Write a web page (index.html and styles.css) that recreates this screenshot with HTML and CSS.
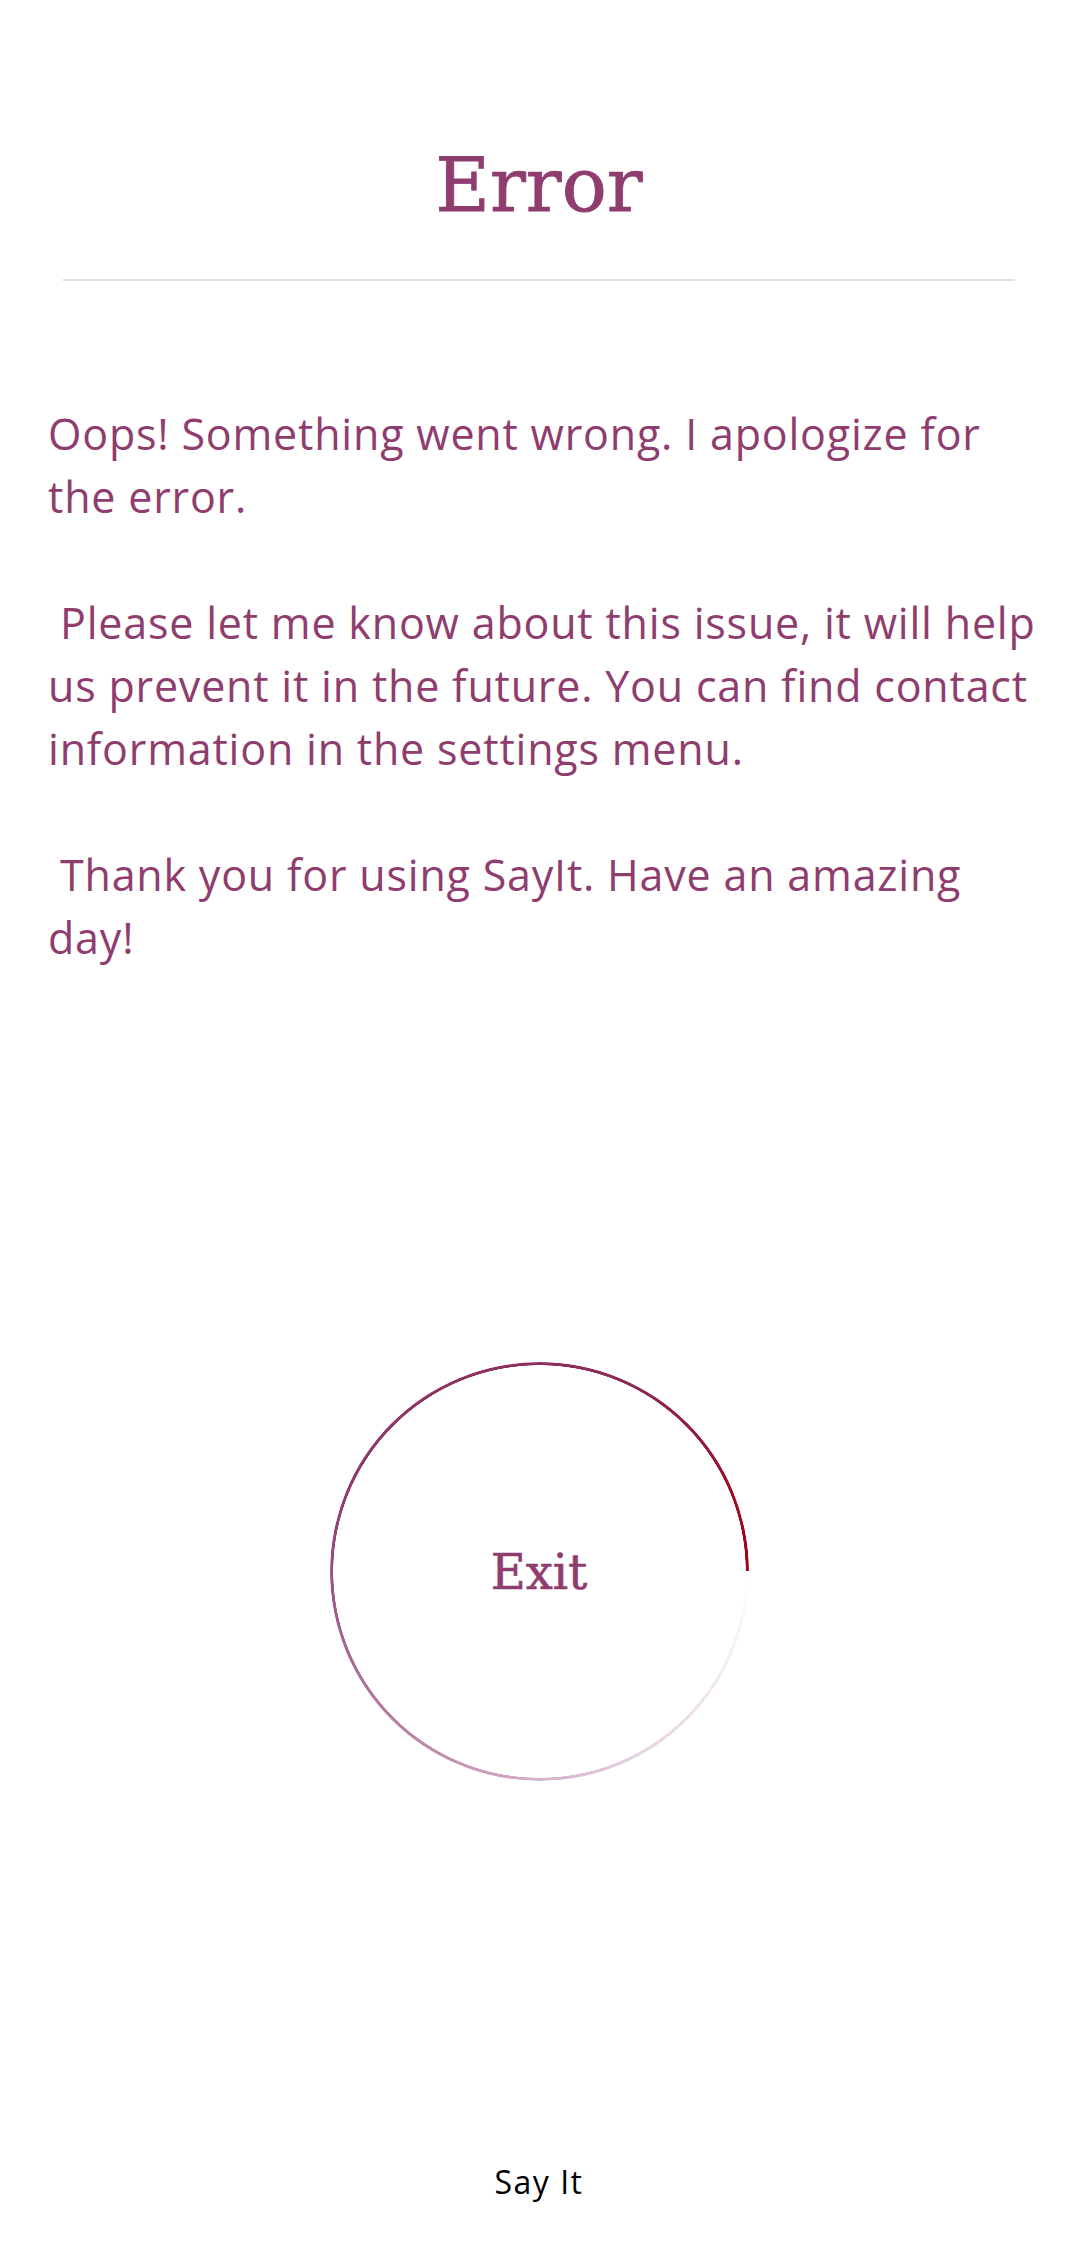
FILE: index.html
```html
<!DOCTYPE html>
<html lang="en">
<head>
<meta charset="utf-8">
<title>Error</title>
<link rel="stylesheet" href="styles.css">
</head>
<body>
<div class="page">
  <header class="header">
    <h1 class="title">Error</h1>
  </header>
  <hr class="divider">
  <p class="message">Oops! Something went wrong. I apologize for the error.

 Please let me know about this issue, it will help us prevent it in the future. You can find contact information in the settings menu.

 Thank you for using SayIt. Have an amazing day!</p>
  <div class="action">
    <button class="exit-btn" type="button"><span class="exit-label">Exit</span></button>
  </div>
  <footer class="footer">Say It</footer>
</div>
</body>
</html>
```
FILE: styles.css
```css
* { box-sizing: border-box; }
html, body { margin: 0; padding: 0; background: #ffffff; }
.page {
  width: 1078px;
  height: 2252px;
  display: flex;
  flex-direction: column;
}
.header {
  padding-top: 148px;
  display: flex;
  justify-content: center;
}
.title {
  margin: 0;
  font-family: "DejaVu Serif", serif;
  font-weight: normal;
  font-size: 75px;
  line-height: 75px;
  color: #8f3d6f;
  -webkit-text-stroke: 0.8px #8f3d6f;
}
.divider {
  margin: 56px 63px 0;
  border: 0;
  height: 2px;
  background: #dedede;
}
.message {
  margin: 121px 0 0;
  padding: 0 40px 0 48px;
  white-space: pre-wrap;
  font-family: "Open Sans", sans-serif;
  font-size: 43px;
  letter-spacing: 0.8px;
  line-height: 63px;
  color: #8f3d6f;
}
.action {
  display: flex;
  justify-content: center;
  margin-top: 393px;
}
.exit-btn {
  position: relative;
  width: 419px;
  height: 419px;
  border: 0;
  padding: 0;
  background: transparent;
  display: flex;
  align-items: center;
  justify-content: center;
  cursor: pointer;
}
.exit-btn::before {
  content: "";
  position: absolute;
  inset: 0;
  border-radius: 50%;
  background: conic-gradient(from 90deg, rgba(255,255,255,0) 0deg, #e9d3e1 60deg, #c08eb0 120deg, #8e3d6e 200deg, #8d2a55 300deg, #a00012 360deg);
  -webkit-mask: radial-gradient(farthest-side, transparent calc(100% - 3.5px), #000 calc(100% - 3px));
  mask: radial-gradient(farthest-side, transparent calc(100% - 3.5px), #000 calc(100% - 3px));
}
.exit-label {
  font-family: "DejaVu Serif", serif;
  font-size: 48px;
  line-height: 1;
  color: #8f3d6f;
  -webkit-text-stroke: 0.6px #8f3d6f;
}
.footer {
  margin-top: auto;
  padding-bottom: 50px;
  text-align: center;
  font-family: "Open Sans", sans-serif;
  font-size: 32px;
  letter-spacing: 1.5px;
  line-height: 40px;
  color: #000;
}
```
